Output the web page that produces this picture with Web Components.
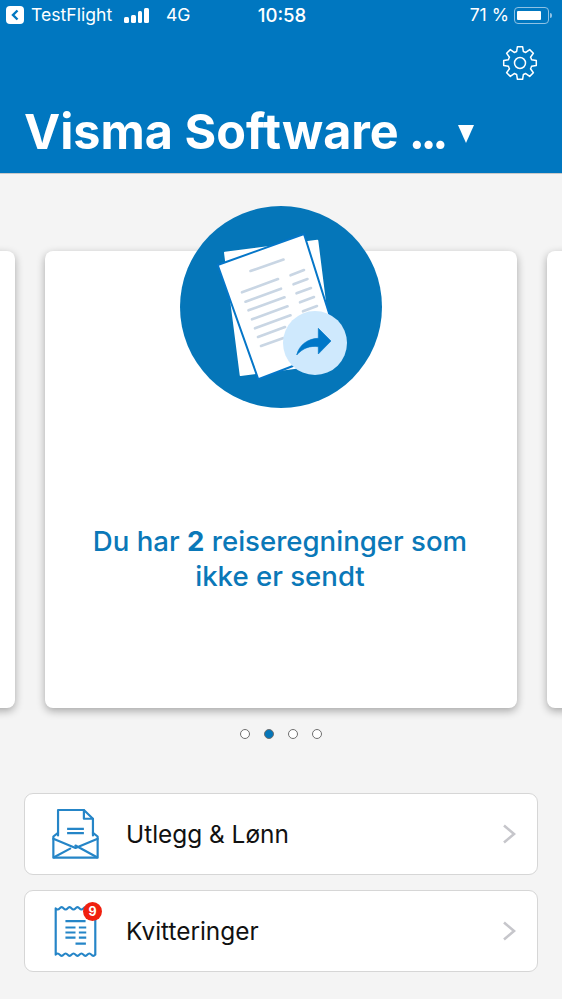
<!DOCTYPE html>
<html lang="nb"><head><meta charset="utf-8"><title>Visma</title>
<style>
html,body{margin:0;padding:0;height:999px;overflow:hidden;background:#f4f4f4;font-family:Inter,"Noto Sans",sans-serif}
</style></head><body>
<app-header title-text="Visma Software"></app-header>
<task-carousel>
  <promo-card slot="prev"></promo-card>
  <promo-card slot="main" hero>Du har <b>2</b> reiseregninger som ikke er sendt</promo-card>
  <promo-card slot="next"></promo-card>
</task-carousel>
<page-dots count="4" active="1"></page-dots>
<nav-list>
  <nav-row icon="mail">Utlegg &amp; Lønn</nav-row>
  <nav-row icon="receipt" badge="9">Kvitteringer</nav-row>
</nav-list>
<script>
function def(name, html){
  customElements.define(name, class extends HTMLElement{
    connectedCallback(){
      if(this.shadowRoot) return;
      const r=this.attachShadow({mode:'open'});
      r.innerHTML=typeof html==='function'?html(this):html;
    }
  });
}
function gearPath(cx,cy,ro,ri,n){
  let d='';const st=Math.PI*2/n;
  for(let i=0;i<n;i++){
    const a=i*st-Math.PI/2;
    const pts=[[ri,a-st*.36],[ro,a-st*.2],[ro,a+st*.2],[ri,a+st*.36]];
    pts.forEach((p,j)=>{
      const x=(cx+p[0]*Math.cos(p[1])).toFixed(2),y=(cy+p[0]*Math.sin(p[1])).toFixed(2);
      d+=(i===0&&j===0?'M':(j===0?`A${ri} ${ri} 0 0 1 `:'L'))+x+' '+y;
    });
  }
  return d+'Z';
}
def('status-bar',`<style>
:host{display:flex;align-items:center;height:30px;color:#fff;font:400 17.600px/30px Inter,sans-serif;padding:0 9px 0 6px;position:relative}
.back{width:18px;height:18px;background:#fff;border-radius:4px;display:flex;align-items:center;justify-content:center;margin-right:7px}
.sig{display:flex;align-items:flex-end;gap:2px;height:15px;margin:0 17px 0 12px}
.sig i{display:block;width:4.700px;background:#fff;border-radius:1.500px}
.time{position:absolute;left:2px;right:0;text-align:center;font-weight:500;font-size:18.600px}
.pct{margin-left:auto;margin-right:5px}
.bat{width:35px;height:17px;border:1px solid #8fc2e4;border-radius:4px;padding:3px 2px;box-sizing:border-box;position:relative;margin-right:4px}
.bat i{display:block;width:24px;height:100%;background:#fff;border-radius:1px}
.bat:after{content:"";position:absolute;right:-4px;top:5px;width:2px;height:5px;background:#8fc2e4;border-radius:0 2px 2px 0}
</style>
<span class="back"><svg width="10" height="12" viewBox="0 0 10 12"><path d="M7.5 1.5 3 6l4.5 4.5" fill="none" stroke="#0077c0" stroke-width="2.4"/></svg></span>
<span>TestFlight</span>
<span class="sig"><i style="height:6px"></i><i style="height:8px"></i><i style="height:12px"></i><i style="height:15px"></i></span>
<span>4G</span><span class="time">10:58</span><span class="pct">71 %</span><span class="bat"><i></i></span>`);
def('app-header',h=>`<style>
:host{display:block;height:173px;background:#0077c0;border-bottom:1px solid #c9c9c9;color:#fff;position:relative}
.gear{position:absolute;right:24px;top:45px;display:block}
.title{position:absolute;left:24px;top:101px;font:700 48.500px/62px Inter,sans-serif;white-space:nowrap;display:flex;align-items:center}
.dots{margin-left:10px;letter-spacing:-4.500px}
.tri{display:block;margin-left:14px;margin-top:4px}
</style><status-bar></status-bar>
<svg class="gear" width="36" height="36" viewBox="0 0 36 36" fill="none" stroke="#fff" stroke-width="1.5" stroke-linejoin="round"><path d="${gearPath(18,18,16.5,12,8)}"/><circle cx="18" cy="18" r="5.5"/></svg>
<div class="title"><span>${h.getAttribute('title-text')}</span><span class="dots">...</span><svg class="tri" width="16" height="18" viewBox="0 0 16 18"><path d="M0 0h16L8 18z" fill="#fff"/></svg></div>`);
def('task-carousel',`<style>
:host{display:block;overflow:hidden;padding:77px 0 21px}
.track{display:flex;justify-content:center;gap:30px}
</style><div class="track"><slot name="prev"></slot><slot name="main"></slot><slot name="next"></slot></div>`);
const hero=`<svg class="hero" width="202" height="202" viewBox="0 0 202 202">
<circle cx="101" cy="101" r="101" fill="#0576b9"/>
<path d="M45 46.700 137.300 34.700 152.700 157 60.700 169z" fill="#fff" stroke="#fff" stroke-width="2" stroke-linejoin="round"/>
<path d="M37.700 59 124 28 160 142 78.300 173.300z" fill="#fff" stroke="#0576c8" stroke-width="2" stroke-linejoin="round"/>
<g stroke="#c9d6e4" stroke-width="2.600" stroke-linecap="round">
<path d="M70.500 65 103.500 53.500"/>
<path d="M62 86.300 98 73M65.500 95.700 101 82.700M68.500 104.300 104.500 91.300M72 113.300 107.500 100.300M75 122.300 110.500 109.300M78 131 105 121M81 140 103.500 132"/>
<path d="M110.500 69.300 124 64M113.500 78.300 127.500 73M116.500 87.300 131 82M120 96.300 134 91M123 105.300 137 100"/>
</g>
<circle cx="135" cy="137" r="32" fill="#cfe9fd"/>
<path d="M116.700 149C119 139 128 132.500 138.300 132.300V122.300L151 135 138.300 148V140.700C130 139.500 123 142 116.700 149Z" fill="#0077c8" stroke="#0077c8" stroke-width=".6" stroke-linejoin="round"/>
</svg>`;
def('promo-card',h=>`<style>
:host{display:block;width:472px;height:457px;box-sizing:border-box;background:#fff;border-radius:8px;box-shadow:0 3px 9px rgba(0,0,0,.32);position:relative;flex:none}
.hero{position:absolute;left:135px;top:-45px;display:block}
.text{padding:273px 31px 0 29px;text-align:center;color:#0a78b8;font:500 27.600px/35px Inter,sans-serif}
b{font-weight:700}
</style>${h.hasAttribute('hero')?hero+'<div class="text"><slot></slot></div>':''}`);
def('page-dots',h=>{
  const n=+h.getAttribute('count'),a=+h.getAttribute('active');let s='';
  for(let i=0;i<n;i++)s+=`<i class="${i===a?'on':''}"></i>`;
  return `<style>
:host{display:flex;justify-content:center;gap:14px;height:10px}
i{display:block;width:10px;height:10px;box-sizing:border-box;border:1.3px solid #6f6f6f;border-radius:50%;background:#fff}
i.on{background:#0576b9}
</style>${s}`;
});
def('nav-list',`<style>
:host{display:flex;flex-direction:column;gap:15px;margin:54px 24px 0}
</style><slot></slot>`);
const icons={
mail:`<svg width="47" height="52" viewBox="95 68 140 155" fill="none" stroke="#2585c7" stroke-width="6.500" stroke-linejoin="round" stroke-linecap="round">
<path d="M113 150V74H190L217 100V150"/><path d="M190 74V100H217"/>
<path d="M140 130H190M140 143H190" stroke-linecap="butt"/>
<path d="M113 142 99 153V216H231V153L217 142"/>
<path d="M99 160 165 187 231 160M165 180 229 215M101 215 149 189"/>
</svg>`,
receipt:`<svg width="47" height="52" viewBox="95 358 140 155" fill="none" stroke="#2585c7" stroke-width="6.500" stroke-linejoin="round" stroke-linecap="round">
<path d="M106 368q5.900 7 11.800 0t11.800 0 11.800 0 11.800 0 11.800 0 11.800 0 11.800 0 11.800 0 11.800 0 11.800 0V506q-5.900 7-11.800 0t-11.800 0-11.800 0-11.800 0-11.800 0-11.800 0-11.800 0-11.800 0-11.800 0-11.800 0Z"/>
<g stroke-linecap="butt"><path d="M135 406H195M135 425H165M175 425H197M135 440H165M175 440H197M135 455H165M175 455H197M165 473H196"/></g>
</svg>`};
def('nav-row',h=>{
  const b=h.getAttribute('badge');
  return `<style>
:host{display:flex;align-items:center;height:82px;box-sizing:border-box;background:#fff;border:1px solid #d6d6d6;border-radius:9px;color:#111;font:400 24.400px/30px Inter,sans-serif}
.ic{position:relative;flex:none;width:47px;height:52px;margin-left:27px;margin-right:27px}
.ic svg{display:block}
.badge{position:absolute;left:31px;top:-3px;width:19px;height:19px;border-radius:50%;background:#f0200f;color:#fff;font:700 12.500px/19px Inter,sans-serif;text-align:center}
.lbl{flex:1}
.chev{flex:none;margin-right:21px;display:block}
</style><span class="ic">${icons[h.getAttribute('icon')]}${b?`<span class="badge">${b}</span>`:''}</span>
<span class="lbl"><slot></slot></span>
<svg class="chev" width="14" height="20" viewBox="0 0 14 20"><path d="M2 1.500 12 10 2 18.500" fill="none" stroke="#c6c6cb" stroke-width="2.600"/></svg>`;
});
</script>
</body></html>
